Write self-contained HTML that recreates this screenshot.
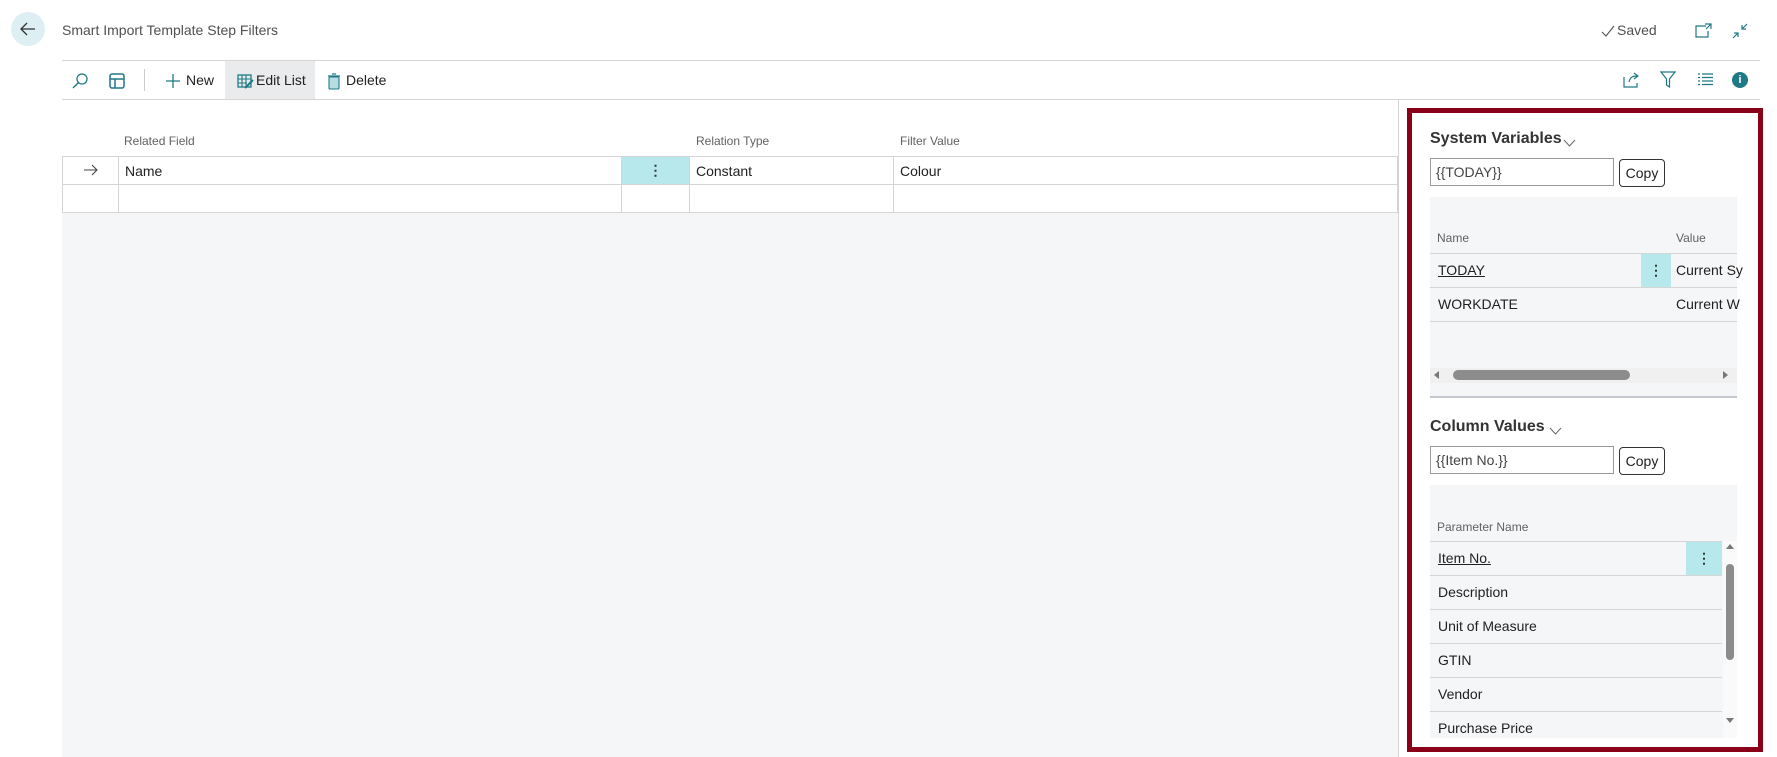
<!DOCTYPE html>
<html><head><meta charset="utf-8"><style>
*{box-sizing:border-box;margin:0;padding:0}
body{width:1777px;height:757px;overflow:hidden;background:#fff;font-family:"Segoe UI","Liberation Sans",sans-serif;color:#212121;position:relative;font-size:14px}
.a{position:absolute}
.t{position:absolute;white-space:nowrap}
.hl{position:absolute;height:1px;background:#d5d5d5}
.vl{position:absolute;width:1px;background:#d5d5d5}
.gh{color:#616161;font-size:12px}
.dots{position:absolute;background:#b7e8ec;text-align:center;font-weight:bold;color:#333;line-height:30px}
</style></head><body>
<div class="a" style="left:11px;top:12px;width:34px;height:34px;border-radius:50%;background:#ddeff3"></div>
<svg class="a" style="left:18px;top:19px" width="20" height="20" viewBox="0 0 20 20"><path d="M17 10H3M9 4L3 10L9 16" fill="none" stroke="#333" stroke-width="1.3"/></svg>
<div class="t" style="left:62px;top:22px;font-size:14px;color:#505050">Smart Import Template Step Filters</div>
<svg class="a" style="left:1601px;top:24px" width="14" height="14" viewBox="0 0 14 14"><path d="M1 8L5 12L13 2" fill="none" stroke="#555" stroke-width="1.1"/></svg>
<div class="t" style="left:1617px;top:22px;font-size:14px;color:#505050">Saved</div>
<svg class="a" style="left:1695px;top:23px" width="18" height="16" viewBox="0 0 18 16"><path d="M11 3H1V14H13V8M10 1H16V6M16 1L11 6" fill="none" stroke="#1f7a85" stroke-width="1.2"/></svg>
<svg class="a" style="left:1731px;top:22px" width="18" height="18" viewBox="0 0 18 18"><path d="M16 2L11 7M11 3V7H15M2 16L7 11M3 11H7V15" fill="none" stroke="#1f7a85" stroke-width="1.2"/></svg>
<div class="hl" style="left:62px;top:60px;width:1698px"></div>
<div class="hl" style="left:62px;top:99px;width:1698px"></div>
<svg class="a" style="left:71px;top:72px" width="18" height="18" viewBox="0 0 18 18"><circle cx="11" cy="7" r="5" fill="none" stroke="#1f7a85" stroke-width="1.3"/><path d="M7.5 10.5L2 16" stroke="#1f7a85" stroke-width="1.4"/></svg>
<svg class="a" style="left:109px;top:73px" width="17" height="17" viewBox="0 0 17 17"><rect x="1" y="1" width="14" height="14" rx="2" fill="none" stroke="#1f7a85" stroke-width="1.5"/><path d="M1 6H15M6 6V15" stroke="#1f7a85" stroke-width="1.5"/></svg>
<div class="vl" style="left:144px;top:69px;height:22px;background:#ccc"></div>
<svg class="a" style="left:165px;top:73px" width="16" height="16" viewBox="0 0 16 16"><path d="M8 1V15M1 8H15" stroke="#1f7a85" stroke-width="1.3"/></svg>
<div class="t" style="left:186px;top:72px;font-size:14px">New</div>
<div class="a" style="left:225px;top:61px;width:90px;height:38px;background:#eaebed"></div>
<svg class="a" style="left:237px;top:74px" width="17" height="15" viewBox="0 0 17 15"><rect x="1" y="1" width="13" height="12" fill="none" stroke="#1f7a85" stroke-width="1.3"/><path d="M1 5H14M1 9H10M5 1V13M9 1V13" stroke="#1f7a85" stroke-width="1.1"/><path d="M8 14L16 6" stroke="#1f7a85" stroke-width="2"/></svg>
<div class="t" style="left:256px;top:72px;font-size:14px">Edit List</div>
<svg class="a" style="left:327px;top:73px" width="14" height="17" viewBox="0 0 14 17"><rect x="2" y="4" width="10" height="12" rx="1" fill="#b7dde2" stroke="#1f7a85" stroke-width="1.1"/><path d="M1 3H13M5 1H9" stroke="#1f7a85" stroke-width="1.2"/></svg>
<div class="t" style="left:346px;top:72px;font-size:14px">Delete</div>
<svg class="a" style="left:1623px;top:71px" width="18" height="17" viewBox="0 0 18 17"><path d="M1 6V16H14V12M6 11C7 6 10 5 14 5M11 2L15 5L11 8" fill="none" stroke="#1f7a85" stroke-width="1.2"/></svg>
<svg class="a" style="left:1660px;top:71px" width="16" height="17" viewBox="0 0 16 17"><path d="M1 1H15L9.5 8V16L6.5 14V8Z" fill="none" stroke="#1f7a85" stroke-width="1.2"/></svg>
<svg class="a" style="left:1697px;top:73px" width="17" height="13" viewBox="0 0 17 13"><path d="M1 1H3M5 1H16M1 4.5H3M5 4.5H16M1 8H3M5 8H16M1 11.5H3M5 11.5H16" stroke="#1f7a85" stroke-width="1.2"/></svg>
<div class="a" style="left:1732px;top:72px;width:16px;height:16px;border-radius:50%;background:#1f7a85;color:#fff;font-size:11px;font-weight:bold;text-align:center;line-height:16px">i</div>
<div class="a" style="left:62px;top:212px;width:1336px;height:545px;background:#f5f6f8"></div>
<div class="vl" style="left:1398px;top:100px;height:657px"></div>
<div class="t gh" style="left:124px;top:134px">Related Field</div>
<div class="t gh" style="left:696px;top:134px">Relation Type</div>
<div class="t gh" style="left:900px;top:134px">Filter Value</div>
<div class="a" style="left:62px;top:156px;width:1336px;height:57px;border:1px solid #d5d5d5;background:#fff"></div>
<div class="hl" style="left:62px;top:184px;width:1336px"></div>
<div class="vl" style="left:118px;top:156px;height:56px"></div>
<div class="vl" style="left:621px;top:156px;height:56px"></div>
<div class="vl" style="left:689px;top:156px;height:56px"></div>
<div class="vl" style="left:893px;top:156px;height:56px"></div>
<div class="dots" style="left:622px;top:157px;width:67px;height:27px;line-height:27px">⋮</div>
<svg class="a" style="left:83px;top:164px" width="15" height="12" viewBox="0 0 15 12"><path d="M1 6H14M9 1L14 6L9 11" fill="none" stroke="#444" stroke-width="1.1"/></svg>
<div class="t" style="left:125px;top:163px">Name</div>
<div class="t" style="left:696px;top:163px">Constant</div>
<div class="t" style="left:900px;top:163px">Colour</div>
<div class="a" style="left:1407px;top:108px;width:356px;height:644px;border:5px solid #8a0018;background:#fff;overflow:hidden">
 <div class="t" style="left:18px;top:17px;font-size:16px;font-weight:600;color:#333">System Variables</div>
 <svg class="a" style="left:151px;top:26px" width="13" height="8" viewBox="0 0 13 8"><path d="M1 1L6.5 7L12 1" fill="none" stroke="#666" stroke-width="1"/></svg>
 <div class="a" style="left:18px;top:45px;width:184px;height:28px;border:1px solid #999;padding:5px 5px;font-size:14px;color:#444">{{TODAY}}</div>
 <div class="a" style="left:207px;top:46px;width:46px;height:28px;border:1px solid #333;border-radius:4px;font-family:'Liberation Sans',sans-serif;font-size:14px;text-align:center;line-height:26px">Copy</div>
 <div class="a" style="left:18px;top:84px;width:307px;height:201px;background:#f5f6f8"></div>
 <div class="t gh" style="left:25px;top:118px">Name</div>
 <div class="t gh" style="left:264px;top:118px">Value</div>
 <div class="hl" style="left:18px;top:140px;width:307px"></div>
 <div class="hl" style="left:18px;top:174px;width:307px"></div>
 <div class="hl" style="left:18px;top:208px;width:307px"></div>
 <div class="dots" style="left:229px;top:141px;width:30px;height:33px;line-height:33px">⋮</div>
 <div class="t" style="left:26px;top:149px;text-decoration:underline">TODAY</div>
 <div class="t" style="left:264px;top:149px">Current Sy</div>
 <div class="t" style="left:26px;top:183px">WORKDATE</div>
 <div class="t" style="left:264px;top:183px">Current W</div>
 <div class="a" style="left:18px;top:255px;width:307px;height:15px;background:#f0f0f0"></div>
 <div class="a" style="left:22px;top:258px;width:0;height:0;border:4px solid transparent;border-right:5px solid #777;border-left:0"></div>
 <div class="a" style="left:41px;top:257px;width:177px;height:10px;border-radius:5px;background:#8c8c8c"></div>
 <div class="a" style="left:311px;top:258px;width:0;height:0;border:4px solid transparent;border-left:5px solid #777;border-right:0"></div>
 <div class="a" style="left:18px;top:283px;width:307px;height:2px;background:#c4c7cb"></div>
 <div class="t" style="left:18px;top:305px;font-size:16px;font-weight:600;color:#333">Column Values</div>
 <svg class="a" style="left:137px;top:314px" width="13" height="8" viewBox="0 0 13 8"><path d="M1 1L6.5 7L12 1" fill="none" stroke="#666" stroke-width="1"/></svg>
 <div class="a" style="left:18px;top:333px;width:184px;height:28px;border:1px solid #999;padding:5px 5px;font-size:14px;color:#444">{{Item No.}}</div>
 <div class="a" style="left:207px;top:334px;width:46px;height:28px;border:1px solid #333;border-radius:4px;font-family:'Liberation Sans',sans-serif;font-size:14px;text-align:center;line-height:26px">Copy</div>
 <div class="a" style="left:18px;top:372px;width:307px;height:253px;background:#f5f6f8"></div>
 <div class="t gh" style="left:25px;top:407px">Parameter Name</div>
 <div class="hl" style="left:18px;top:428px;width:292px"></div>
 <div class="hl" style="left:18px;top:462px;width:292px"></div>
 <div class="hl" style="left:18px;top:496px;width:292px"></div>
 <div class="hl" style="left:18px;top:530px;width:292px"></div>
 <div class="hl" style="left:18px;top:564px;width:292px"></div>
 <div class="hl" style="left:18px;top:598px;width:292px"></div>
 <div class="dots" style="left:274px;top:429px;width:36px;height:33px;line-height:33px">⋮</div>
 <div class="t" style="left:26px;top:437px;text-decoration:underline">Item No.</div>
 <div class="t" style="left:26px;top:471px">Description</div>
 <div class="t" style="left:26px;top:505px">Unit of Measure</div>
 <div class="t" style="left:26px;top:539px">GTIN</div>
 <div class="t" style="left:26px;top:573px">Vendor</div>
 <div class="t" style="left:26px;top:607px">Purchase Price</div>
 <div class="a" style="left:311px;top:428px;width:14px;height:197px;background:#fafafa"></div>
 <div class="a" style="left:314px;top:431px;width:0;height:0;border:4px solid transparent;border-bottom:5px solid #777;border-top:0"></div>
 <div class="a" style="left:314px;top:451px;width:8px;height:96px;border-radius:4px;background:#8c8c8c"></div>
 <div class="a" style="left:314px;top:605px;width:0;height:0;border:4px solid transparent;border-top:5px solid #777;border-bottom:0"></div>
</div>
</body></html>
